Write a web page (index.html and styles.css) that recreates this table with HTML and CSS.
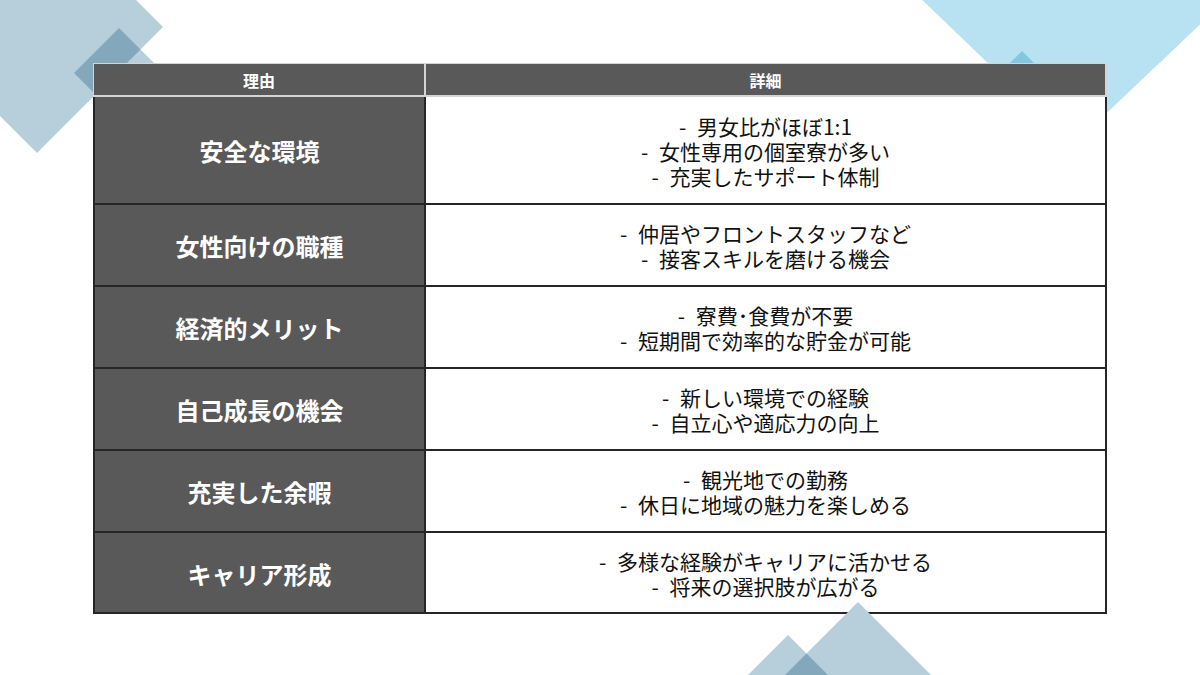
FILE: index.html
```html
<!DOCTYPE html>
<html lang="ja">
<head>
<meta charset="utf-8">
<link rel="stylesheet" href="styles.css">
</head>
<body>
<div class="page">
  <svg class="deco deco-back" width="1200" height="675" viewBox="0 0 1200 675">
    <polygon class="grey" points="37,-99 163,27 37,153 -89,27"/>
    <polygon class="grey" points="119,28 164,73 119,118 74,73"/>
    <polygon class="blue" points="1073,-170 1230,-4 1073,145 916,-6"/>
    <polygon class="blue" points="1022,51 1069,98 1022,145 975,98"/>
  </svg>
  <table class="reasons">
    <colgroup><col class="c1"><col class="c2"></colgroup>
    <thead>
      <tr><th class="h1">理由</th><th class="h2">詳細</th></tr>
    </thead>
    <tbody>
      <tr class="r-tall"><td class="k">安全な環境</td><td class="v">- 男女比がほぼ1:1<br>- 女性専用の個室寮が多い<br>- 充実したサポート体制</td></tr>
      <tr><td class="k">女性向けの職種</td><td class="v">- 仲居やフロントスタッフなど<br>- 接客スキルを磨ける機会</td></tr>
      <tr><td class="k">経済的メリット</td><td class="v">- 寮費･食費が不要<br>- 短期間で効率的な貯金が可能</td></tr>
      <tr><td class="k">自己成長の機会</td><td class="v">- 新しい環境での経験<br>- 自立心や適応力の向上</td></tr>
      <tr><td class="k">充実した余暇</td><td class="v">- 観光地での勤務<br>- 休日に地域の魅力を楽しめる</td></tr>
      <tr class="r-last"><td class="k">キャリア形成</td><td class="v">- 多様な経験がキャリアに活かせる<br>- 将来の選択肢が広がる</td></tr>
    </tbody>
  </table>
  <svg class="deco deco-front" width="1200" height="675" viewBox="0 0 1200 675">
    <polygon class="grey" points="858,602 1000,744 858,886 716,744"/>
    <polygon class="grey" points="788,635 900,747 788,859 676,747"/>
  </svg>
</div>
</body>
</html>
```
FILE: styles.css
```css
html, body {
  margin: 0;
  padding: 0;
  background: #ffffff;
}
.page {
  position: relative;
  width: 1200px;
  height: 675px;
  overflow: hidden;
  padding: 63px 0 0 93px;
  box-sizing: border-box;
  font-family: "Noto Sans CJK JP", "Noto Sans", sans-serif;
}
.deco {
  position: absolute;
  left: 0;
  top: 0;
  pointer-events: none;
}
.deco-back { z-index: 0; }
.deco-front { z-index: 2; }
.deco polygon { mix-blend-mode: multiply; }
.grey { fill: #b7cfdb; }
.blue { fill: #b8e1f1; }

.reasons {
  position: relative;
  z-index: 1;
  border-collapse: separate;
  border-spacing: 0;
  table-layout: fixed;
  width: 1014px;
}
.c1 { width: 333px; }
.c2 { width: 681px; }

.reasons th {
  background: #595959;
  color: #ffffff;
  font-size: 16px;
  font-weight: 700;
  height: 31px;
  padding: 0;
  border-top: 1px solid #d4d4d4;
  border-bottom: 2px solid #d4d4d4;
  border-right: 2px solid #d4d4d4;
  text-align: center;
  vertical-align: middle;
}
.reasons th.h1 { border-left: 1px solid #d4d4d4; }

.reasons td {
  padding: 2px 0 0;
  height: 78px;
  text-align: center;
  vertical-align: middle;
  border-bottom: 2px solid #262626;
  border-right: 2px solid #262626;
}
.reasons tr.r-tall td { height: 104px; }
.reasons tr.r-last td { height: 77px; }
.reasons td.k {
  background: #595959;
  color: #ffffff;
  font-size: 24px;
  font-weight: 700;
  line-height: 30px;
  border-left: 2px solid #262626;
}
.reasons td.v {
  background: #ffffff;
  color: #111111;
  font-size: 21px;
  font-weight: 400;
  line-height: 25px;
  word-spacing: 6px;
}
```
